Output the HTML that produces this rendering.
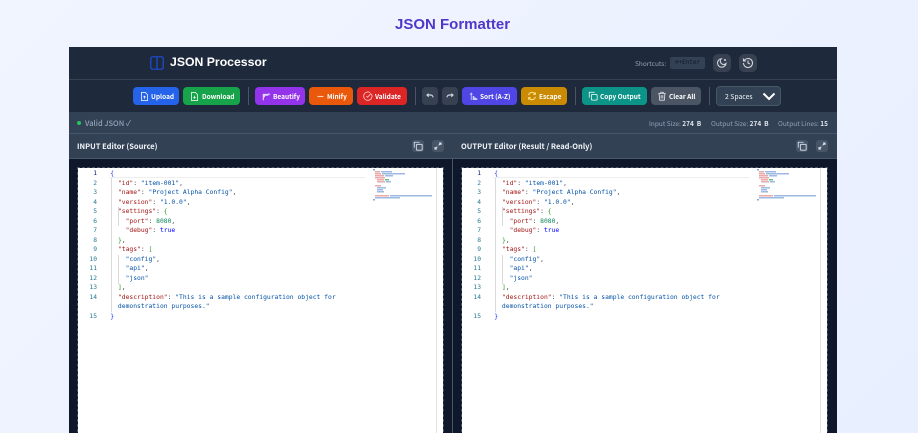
<!DOCTYPE html>
<html lang="en"><head><meta charset="utf-8"><title>JSON Formatter</title>
<style>
*{box-sizing:border-box}
html,body{margin:0;padding:0;width:918px;height:433px;overflow:hidden}
body{background:linear-gradient(135deg,#f1f5ff,#e8efff);font-family:"Noto Sans CJK JP","Liberation Sans",sans-serif;position:relative}
.a{position:absolute}
h1{position:absolute;left:395px;top:15px;margin:0;font:bold 15px/20px "Liberation Sans",sans-serif;color:#4f38c9;white-space:nowrap}
.b{position:absolute;top:87px;height:18px;border-radius:4px;color:#fff;font-weight:700;font-size:6.500px;line-height:18px;white-space:nowrap}
.b span{position:absolute;top:-.5px}
.b svg,.ib svg{position:absolute}
.sep{position:absolute;top:87px;width:1px;height:18px;background:#4b5563}
.ib{position:absolute;background:#374151;border-radius:4px}
.hd{position:absolute;top:135px;height:24px;font-weight:700;font-size:7.500px;line-height:24px;color:#f1f5f9;white-space:nowrap}
.ed{position:absolute;top:167px;width:367px;height:270px;background:#fff;background-clip:padding-box;border:1px dashed #475569;overflow:hidden}
.ln{position:absolute;left:0;width:19px;text-align:right;font:6.300px/9.530px "DejaVu Sans Mono",monospace;color:#237893}
.ln i{font-style:normal;color:#0b216f}
.cd{position:absolute;left:32.300px;font:6.350px/9.530px "DejaVu Sans Mono",monospace;color:#333;white-space:pre}
.k{color:#a31515}.s{color:#0451a5}.n{color:#098658}.t{color:#0000ff}.l1{color:#0431fa}.l2{color:#319331}
.g{position:absolute;width:1px;background:#d9d9d9}
</style></head><body>
<h1>JSON Formatter</h1>
<div class="a" style="left:69px;top:47px;width:768px;height:386px;background:#0f172a"></div>
<div class="a" style="left:69px;top:47px;width:768px;height:33px;background:#1e293b;border-bottom:1px solid #374151"></div>
<div class="a" style="left:69px;top:80px;width:768px;height:32px;background:#1e293b"></div>
<div class="a" style="left:69px;top:112px;width:768px;height:22px;background:#334155;border-bottom:1px solid #475569"></div>
<div class="a" style="left:69px;top:134px;width:768px;height:25px;background:#334155;border-bottom:1px solid #475569"></div>

<svg class="a" style="left:150px;top:56px" width="14" height="14" viewBox="0 0 14 14" fill="none" stroke="#1d4ed8" stroke-width="1.200"><rect x=".8" y=".8" width="12.400" height="12.400" rx="1.500"/><path d="M7 1v12"/></svg>
<div class="a" style="left:170px;top:54px;font:bold 12.250px/17px 'Liberation Sans',sans-serif;color:#fff;white-space:nowrap">JSON Processor</div>
<div class="a" style="left:635px;top:57px;font-size:6.500px;line-height:12px;color:#94a3b8;white-space:nowrap">Shortcuts:</div>
<div class="a" style="left:670px;top:57px;width:35px;height:12px;background:#334155;border-radius:2px;color:#0f172a;font:6px/12px 'DejaVu Sans Mono',monospace;text-align:center;white-space:nowrap">⌘+Enter</div>
<div class="ib" style="left:713px;top:54px;width:18px;height:18px;border-radius:5px"><svg style="left:3px;top:3px" width="12" height="12" viewBox="0 0 24 24" fill="none" stroke="#d1d5db" stroke-width="2.200"><path d="M20 13a8.500 8.500 0 1 1-9.500-9.500A6.500 6.500 0 0 0 20 13z"/><path d="M18 4v4M16 6h4"/></svg></div>
<div class="ib" style="left:739px;top:54px;width:18px;height:18px;border-radius:5px"><svg style="left:3px;top:3px" width="12" height="12" viewBox="0 0 24 24" fill="none" stroke="#d1d5db" stroke-width="2.200"><path d="M3 12a9 9 0 1 0 3-6.700L3 8M3 3v5h5M12 7v5l4 2"/></svg></div>

<div class="b" style="left:133px;width:46px;background:#2563eb"><svg style="left:7px;top:4.500px" width="9" height="9" viewBox="0 0 24 24" fill="none" stroke="#fff" stroke-width="2"><path d="M14 1H4v22h16V7zM12 18v-7M9 14l3-3 3 3"/></svg><span style="left:18px">Upload</span></div>
<div class="b" style="left:183px;width:57px;background:#16a34a"><svg style="left:7px;top:4.500px" width="9" height="9" viewBox="0 0 24 24" fill="none" stroke="#fff" stroke-width="2"><path d="M14 1H4v22h16V7zM12 10v7M9 14l3 3 3-3"/></svg><span style="left:19px">Download</span></div>
<div class="sep" style="left:248px"></div>
<div class="b" style="left:255px;width:50px;background:#9333ea"><svg style="left:7px;top:4.500px" width="9" height="9" viewBox="0 0 24 24" fill="#e9d5ff"><path d="M2 5h14v5H8v4H5v8H2zM18 2l2 3 3 1-3 1-2 3-1-3-3-1 3-1z"/></svg><span style="left:18px">Beautify</span></div>
<div class="b" style="left:309px;width:44px;background:#ea580c"><svg style="left:7px;top:4.500px" width="9" height="9" viewBox="0 0 24 24" stroke="#fed7aa" stroke-width="3"><path d="M4 12h16"/></svg><span style="left:18px">Minify</span></div>
<div class="b" style="left:357px;width:50px;background:#dc2626"><svg style="left:6px;top:4px" width="10" height="10" viewBox="0 0 24 24" fill="none" stroke="#fecaca" stroke-width="2"><path d="M20 7a10 10 0 1 1-3-3"/><path d="M8 12l3 3 8-9"/></svg><span style="left:18px">Validate</span></div>
<div class="sep" style="left:415px"></div>
<div class="ib" style="left:422px;top:87px;width:16px;height:18px"><svg style="left:4px;top:5px" width="8" height="8" viewBox="0 0 24 24" fill="none" stroke="#cbd5e1" stroke-width="3.500"><path d="M8 14L3 9l5-4M3 9h11a7 7 0 0 1 7 7"/></svg></div>
<div class="ib" style="left:442px;top:87px;width:16px;height:18px"><svg style="left:4px;top:5px" width="8" height="8" viewBox="0 0 24 24" fill="none" stroke="#cbd5e1" stroke-width="3.500"><path d="M16 14l5-5-5-4M21 9H10a7 7 0 0 0-7 7"/></svg></div>
<div class="b" style="left:462px;width:55px;background:#4f46e5"><svg style="left:7px;top:4.500px" width="9" height="9" viewBox="0 0 24 24" fill="none" stroke="#c7d2fe" stroke-width="2.400"><path d="M6 3v18M3 7l3-4 3 4M11 12h2v8h-2zM15 16h2v4h-2zM19 18h2v2h-2z"/></svg><span style="left:18px">Sort (A-Z)</span></div>
<div class="b" style="left:521px;width:46px;background:#ca8a04"><svg style="left:6px;top:4px" width="10" height="10" viewBox="0 0 24 24" fill="none" stroke="#fde68a" stroke-width="2.400"><path d="M4 10a8 8 0 0 1 14-4l2 2M20 3v5h-5M20 14a8 8 0 0 1-14 4l-2-2M4 21v-5h5"/></svg><span style="left:18px">Escape</span></div>
<div class="sep" style="left:575px"></div>
<div class="b" style="left:582px;width:65px;background:#0d9488"><svg style="left:6px;top:4px" width="10" height="10" viewBox="0 0 24 24" fill="none" stroke="#fff" stroke-width="1.800"><rect x="8" y="8" width="14" height="14" rx="3"/><path d="M3 16V3h13"/></svg><span style="left:18px">Copy Output</span></div>
<div class="b" style="left:651px;width:50px;background:#4b5563"><svg style="left:6px;top:4px" width="10" height="10" viewBox="0 0 24 24" fill="none" stroke="#e5e7eb" stroke-width="2"><path d="M3 6h18M9 6V3h6v3M5 6l1.500 16h11L19 6M10 10v8M14 10v8"/></svg><span style="left:18px">Clear All</span></div>
<div class="sep" style="left:709px"></div>
<div class="a" style="left:716px;top:86px;width:65px;height:20px;background:#334155;border:1px solid #475569;border-radius:4px;color:#f1f5f9;font-size:6.800px;line-height:18px;padding-left:8px;white-space:nowrap">2 Spaces</div>
<svg class="a" style="left:762px;top:92px" width="14" height="9" viewBox="0 0 14 9" fill="none" stroke="#fff" stroke-width="2"><path d="M1.500 1.500L7 7l5.500-5.500"/></svg>

<div class="a" style="left:77px;top:121px;width:4px;height:4px;border-radius:50%;background:#22c55e"></div>
<div class="a" style="left:85px;top:117px;font-size:7.500px;line-height:14px;color:#94a3b8;font-weight:500;white-space:nowrap">Valid JSON ✓</div>
<div class="a" style="left:649px;top:117px;font-size:6.500px;line-height:13px;color:#94a3b8;white-space:nowrap">Input Size: <b style="color:#e2e8f0">274&nbsp; B</b></div>
<div class="a" style="left:711px;top:117px;font-size:6.500px;line-height:13px;color:#94a3b8;white-space:nowrap">Output Size: <b style="color:#e2e8f0">274&nbsp; B</b></div>
<div class="a" style="left:778px;top:117px;font-size:6.500px;line-height:13px;color:#94a3b8;white-space:nowrap">Output Lines: <b style="color:#e2e8f0">15</b></div>

<div class="hd" style="left:77px">INPUT Editor (Source)</div>
<div class="hd" style="left:461px">OUTPUT Editor (Result / Read-Only)</div>
<div class="ib" style="left:412px;top:140px;width:12px;height:12px;background:#475569;border-radius:3px"><svg style="left:1px;top:1px" width="10" height="10" viewBox="0 0 24 24" fill="none" stroke="#e2e8f0" stroke-width="2"><rect x="8" y="8" width="14" height="14" rx="2"/><path d="M3 16V3h13"/></svg></div>
<div class="ib" style="left:432px;top:140px;width:12px;height:12px;background:#475569;border-radius:3px"><svg style="left:2px;top:2px" width="8" height="8" viewBox="0 0 24 24" fill="none" stroke="#e2e8f0" stroke-width="3"><path d="M14 10l7-7M15 3h6v6M10 14l-7 7M3 15v6h6"/></svg></div>
<div class="ib" style="left:796px;top:140px;width:12px;height:12px;background:#475569;border-radius:3px"><svg style="left:1px;top:1px" width="10" height="10" viewBox="0 0 24 24" fill="none" stroke="#e2e8f0" stroke-width="2"><rect x="8" y="8" width="14" height="14" rx="2"/><path d="M3 16V3h13"/></svg></div>
<div class="ib" style="left:816px;top:140px;width:12px;height:12px;background:#475569;border-radius:3px"><svg style="left:2px;top:2px" width="8" height="8" viewBox="0 0 24 24" fill="none" stroke="#e2e8f0" stroke-width="3"><path d="M14 10l7-7M15 3h6v6M10 14l-7 7M3 15v6h6"/></svg></div>
<div class="a" style="left:452px;top:159px;width:1px;height:274px;background:#475569"></div>

<div class="ed" style="left:77px">
<div class="a" style="left:31px;top:0;width:256px;height:10px;border-bottom:1px solid #eee"></div>
<div class="g" style="left:33px;top:10px;height:134px"></div>
<div class="g" style="left:40px;top:39px;height:19px"></div>
<div class="g" style="left:40px;top:87px;height:29px"></div>
<div class="ln" style="top:1px"><i>1</i><br>2<br>3<br>4<br>5<br>6<br>7<br>8<br>9<br>10<br>11<br>12<br>13<br>14<br>&nbsp;<br>15</div>
<div class="cd" style="top:1px"><span class="l1">{</span>
  <span class="k">"id"</span>: <span class="s">"item-001"</span>,
  <span class="k">"name"</span>: <span class="s">"Project Alpha Config"</span>,
  <span class="k">"version"</span>: <span class="s">"1.0.0"</span>,
  <span class="k">"settings"</span>: <span class="l2">{</span>
    <span class="k">"port"</span>: <span class="n">8080</span>,
    <span class="k">"debug"</span>: <span class="t">true</span>
  <span class="l2">}</span>,
  <span class="k">"tags"</span>: <span class="l2">[</span>
    <span class="s">"config"</span>,
    <span class="s">"api"</span>,
    <span class="s">"json"</span>
  <span class="l2">]</span>,
  <span class="k">"description"</span>: <span class="s">"This is a sample configuration object for
  demonstration purposes."</span>
<span class="l1">}</span></div>
<svg class="a" style="left:295px;top:0" width="62" height="34"><g fill="#e8aaaa"><rect x="2" y="3" width="5" height="1.500"/><rect x="2" y="5" width="6" height="1.500"/><rect x="2" y="7" width="9" height="1.500"/><rect x="2" y="9" width="10" height="1.500"/><rect x="4" y="11" width="7" height="1.500"/><rect x="4" y="13" width="8" height="1.500"/><rect x="2" y="17" width="6" height="1.500"/><rect x="2" y="27" width="14" height="1.500"/></g><g fill="#9dbae2"><rect x="8" y="3" width="11" height="1.500"/><rect x="9" y="5" width="23" height="1.500"/><rect x="12" y="7" width="8" height="1.500"/><rect x="4" y="19" width="9" height="1.500"/><rect x="4" y="21" width="6" height="1.500"/><rect x="4" y="23" width="7" height="1.500"/><rect x="17" y="27" width="42" height="1.500"/><rect x="2" y="29" width="25" height="1.500"/><rect x="13" y="13" width="5" height="1.500"/></g><rect x="12" y="11" width="4" height="1.500" fill="#66bb8f"/><rect x="0" y="1" width="2" height="1.500" fill="#8aa0d8"/><rect x="0" y="31" width="2" height="1.500" fill="#8aa0d8"/></svg>
<div class="a" style="left:358px;top:0;width:1px;height:270px;background:#e2e2e2"></div>
</div>

<div class="ed" style="left:461px">
<div class="a" style="left:31px;top:0;width:256px;height:10px;border-bottom:1px solid #eee"></div>
<div class="g" style="left:33px;top:10px;height:134px"></div>
<div class="g" style="left:40px;top:39px;height:19px"></div>
<div class="g" style="left:40px;top:87px;height:29px"></div>
<div class="ln" style="top:1px"><i>1</i><br>2<br>3<br>4<br>5<br>6<br>7<br>8<br>9<br>10<br>11<br>12<br>13<br>14<br>&nbsp;<br>15</div>
<div class="cd" style="top:1px"><span class="l1">{</span>
  <span class="k">"id"</span>: <span class="s">"item-001"</span>,
  <span class="k">"name"</span>: <span class="s">"Project Alpha Config"</span>,
  <span class="k">"version"</span>: <span class="s">"1.0.0"</span>,
  <span class="k">"settings"</span>: <span class="l2">{</span>
    <span class="k">"port"</span>: <span class="n">8080</span>,
    <span class="k">"debug"</span>: <span class="t">true</span>
  <span class="l2">}</span>,
  <span class="k">"tags"</span>: <span class="l2">[</span>
    <span class="s">"config"</span>,
    <span class="s">"api"</span>,
    <span class="s">"json"</span>
  <span class="l2">]</span>,
  <span class="k">"description"</span>: <span class="s">"This is a sample configuration object for
  demonstration purposes."</span>
<span class="l1">}</span></div>
<svg class="a" style="left:295px;top:0" width="62" height="34"><g fill="#e8aaaa"><rect x="2" y="3" width="5" height="1.500"/><rect x="2" y="5" width="6" height="1.500"/><rect x="2" y="7" width="9" height="1.500"/><rect x="2" y="9" width="10" height="1.500"/><rect x="4" y="11" width="7" height="1.500"/><rect x="4" y="13" width="8" height="1.500"/><rect x="2" y="17" width="6" height="1.500"/><rect x="2" y="27" width="14" height="1.500"/></g><g fill="#9dbae2"><rect x="8" y="3" width="11" height="1.500"/><rect x="9" y="5" width="23" height="1.500"/><rect x="12" y="7" width="8" height="1.500"/><rect x="4" y="19" width="9" height="1.500"/><rect x="4" y="21" width="6" height="1.500"/><rect x="4" y="23" width="7" height="1.500"/><rect x="17" y="27" width="42" height="1.500"/><rect x="2" y="29" width="25" height="1.500"/><rect x="13" y="13" width="5" height="1.500"/></g><rect x="12" y="11" width="4" height="1.500" fill="#66bb8f"/><rect x="0" y="1" width="2" height="1.500" fill="#8aa0d8"/><rect x="0" y="31" width="2" height="1.500" fill="#8aa0d8"/></svg>
<div class="a" style="left:358px;top:0;width:1px;height:270px;background:#e2e2e2"></div>
</div>
</body></html>
